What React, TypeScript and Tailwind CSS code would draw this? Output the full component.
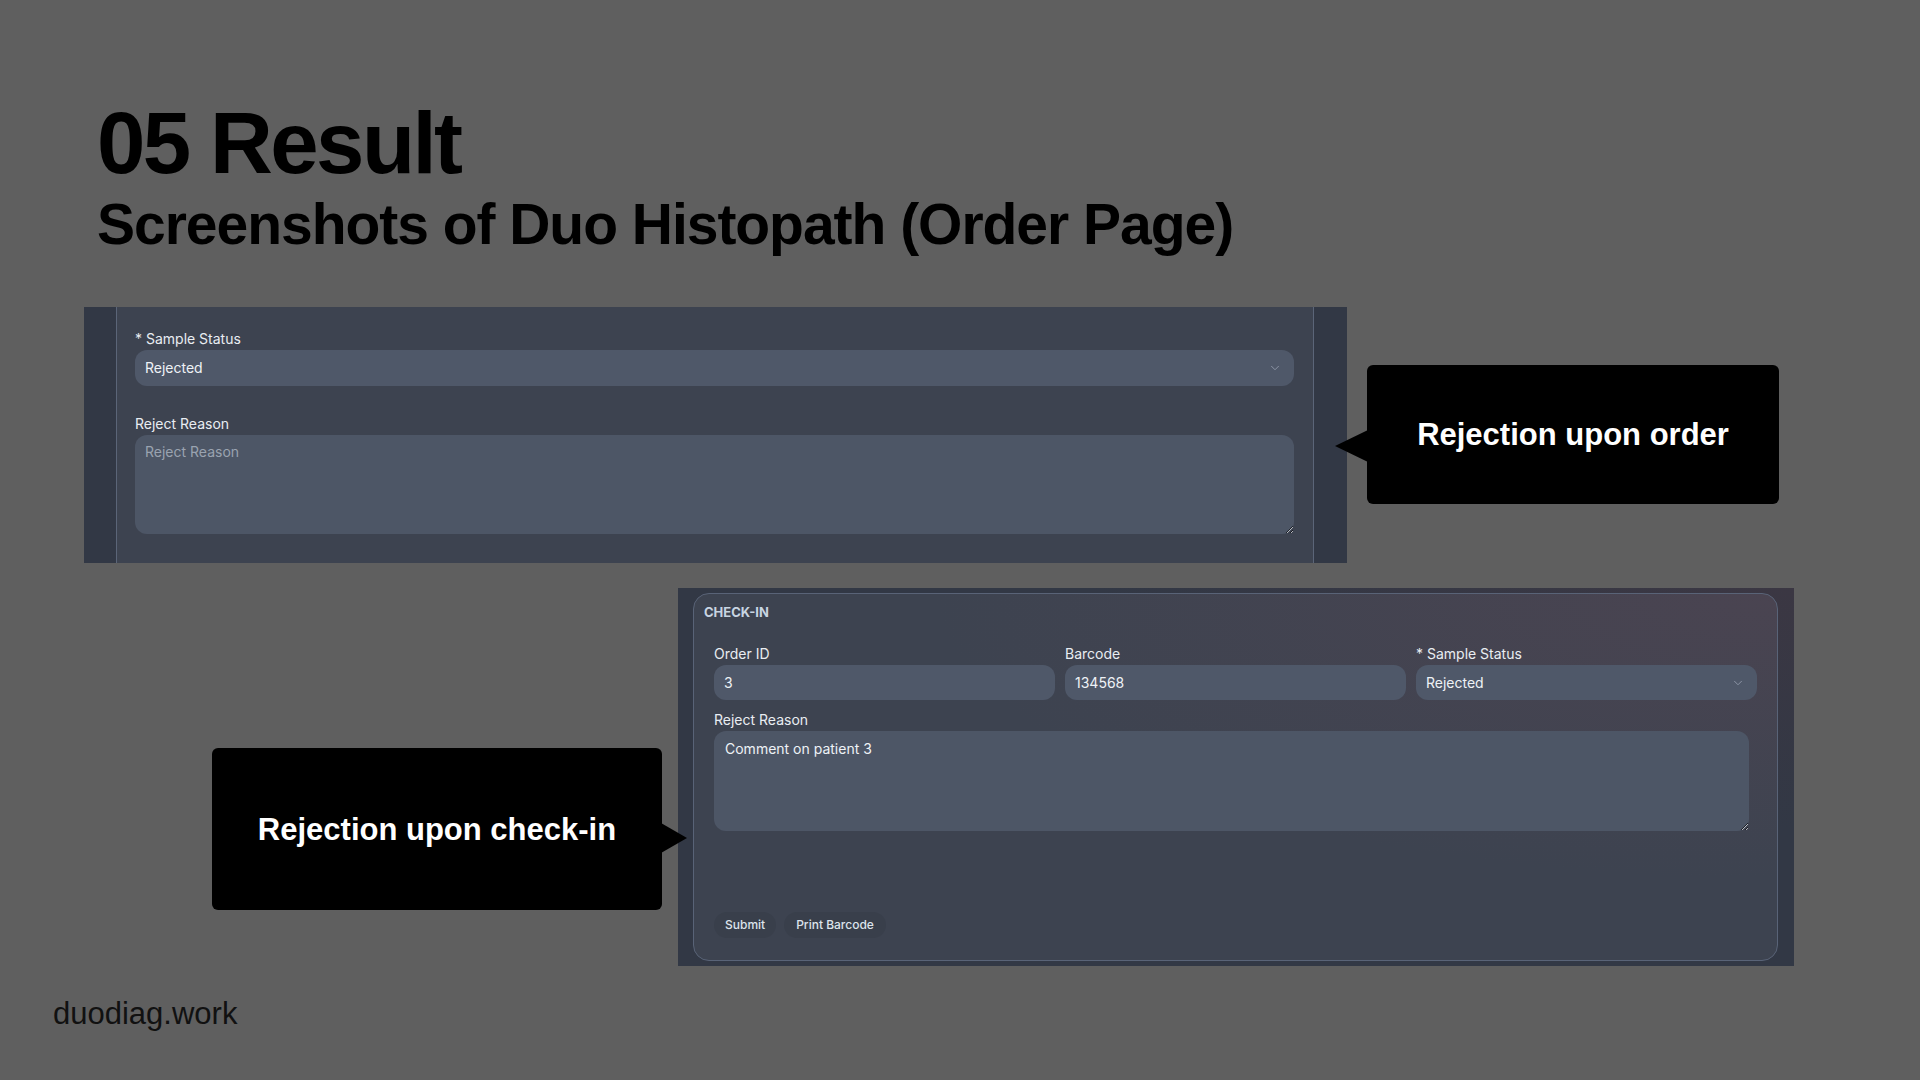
import { ChevronDown } from 'lucide-react';

const ui = { fontFamily: 'Inter, "Noto Sans", sans-serif' };
const slide = { fontFamily: '"Liberation Sans", Arial, sans-serif' };

function Select({ value, height }: { value: string; height: string }) {
  return (
    <div
      className={
        'flex items-center justify-between rounded-[12px] bg-[#4f5869] pl-[10px] pr-[12px] text-sm text-[#eef2f6] ' +
        height
      }
    >
      <span>{value}</span>
      <ChevronDown className="h-[14px] w-[14px] text-[#939cab]" strokeWidth={1.5} />
    </div>
  );
}

function Field({ value }: { value: string }) {
  return (
    <div className="flex h-[35px] items-center rounded-[12px] bg-[#4f5869] pl-[10px] text-sm text-[#eef2f6]">
      {value}
    </div>
  );
}

export default function App() {
  return (
    <div className="flex h-[1080px] w-[1920px] flex-col overflow-hidden bg-[#5f5f5f] pt-[99px]">
      <div className="pl-[97px] text-black" style={slide}>
        <h1 className="text-[87px] font-bold leading-none tracking-[-0.03em]">05 Result</h1>
        <h2 className="mt-[10px] text-[57px] font-bold leading-none tracking-[-0.018em]">
          Screenshots of Duo Histopath (Order Page)
        </h2>
      </div>

      {/* rejection upon order */}
      <div className="ml-[84px] mt-[54px] flex items-start">
        <div className="flex h-[256px] w-[1263px] bg-[#3d4350]" style={ui}>
          <div className="w-[33px] border-r border-[#5b6578] bg-[#323845]" />
          <div className="flex-1 pl-[18px] pr-[19px] pt-[22px]">
            <div className="text-sm leading-5 text-[#e9edf2]">* Sample Status</div>
            <div className="mt-[1px]">
              <Select value="Rejected" height="h-[36px]" />
            </div>
            <div className="mt-[28px] text-sm leading-5 text-[#e9edf2]">Reject Reason</div>
            <textarea
              readOnly
              placeholder="Reject Reason"
              className="mt-[1px] block h-[99px] w-full rounded-[12px] bg-[#4d5666] px-[10px] pt-[7px] text-sm leading-5 text-[#eef2f6] outline-none placeholder:text-[#9aa3b0]"
            />
          </div>
          <div className="w-[34px] border-l border-[#5b6578] bg-[#323845]" />
        </div>

        <div
          className="relative ml-[20px] mt-[58px] flex h-[139px] w-[412px] items-center justify-center rounded-[6px] bg-black pt-[2px] text-[31px] font-bold text-white"
          style={slide}
        >
          <svg className="absolute -left-[32px] top-[65px]" width="33" height="32" viewBox="0 0 33 32">
            <polygon points="0,16 33,0 33,32" fill="#000" />
          </svg>
          Rejection upon order
        </div>
      </div>

      {/* rejection upon check-in */}
      <div className="ml-[212px] mt-[25px] flex items-start">
        <div
          className="relative mr-[16px] mt-[160px] flex h-[162px] w-[450px] items-center justify-center rounded-[6px] bg-black pt-[2px] text-[31px] font-bold text-white"
          style={slide}
        >
          Rejection upon check-in
          <svg className="absolute -right-[25px] top-[75px]" width="26" height="30" viewBox="0 0 26 30">
            <polygon points="0,0 26,15 0,30" fill="#000" />
          </svg>
        </div>

        <div
          className="h-[378px] w-[1116px] bg-[#323845] bg-[radial-gradient(ellipse_at_top_right,#3b3743,transparent_45%)] pb-[5px] pl-[15px] pr-[16px] pt-[5px]"
          style={ui}
        >
          <div className="flex h-full flex-col rounded-[16px] border border-[#596377] bg-[#3d4350] bg-[radial-gradient(ellipse_at_top_right,#4a4451,transparent_55%)] px-[10px] pt-[9px]">
            <div className="text-[13px] font-bold leading-[18px] text-[#c8d5e2]">CHECK-IN</div>
            <div className="px-[10px]">
              <div className="mt-[23px] grid grid-cols-3 gap-x-[10px]">
                <div>
                  <div className="text-sm leading-5 text-[#e9edf2]">Order ID</div>
                  <div className="mt-[1px]">
                    <Field value="3" />
                  </div>
                </div>
                <div>
                  <div className="text-sm leading-5 text-[#e9edf2]">Barcode</div>
                  <div className="mt-[1px]">
                    <Field value="134568" />
                  </div>
                </div>
                <div>
                  <div className="text-sm leading-5 text-[#e9edf2]">* Sample Status</div>
                  <div className="mt-[1px]">
                    <Select value="Rejected" height="h-[35px]" />
                  </div>
                </div>
              </div>
              <div className="mt-[10px] text-sm leading-5 text-[#e9edf2]">Reject Reason</div>
              <textarea
                readOnly
                value="Comment on patient 3"
                className="mt-[1px] block h-[100px] w-[1035px] rounded-[12px] bg-[#4d5666] px-[11px] pt-[8px] text-sm leading-5 text-[#eef2f6] outline-none"
              />
              <div className="mt-[81px] flex gap-[8px]">
                <button className="h-[26px] rounded-full bg-[#393f4b] px-[11px] text-xs font-medium text-[#dde4ec]">
                  Submit
                </button>
                <button className="h-[26px] rounded-full bg-[#393f4b] px-[12px] text-xs font-medium text-[#dde4ec]">
                  Print Barcode
                </button>
              </div>
            </div>
          </div>
        </div>
      </div>

      <div className="mt-[32px] pl-[53px] text-[31px] leading-none text-[#111111]" style={slide}>
        duodiag.work
      </div>
    </div>
  );
}
